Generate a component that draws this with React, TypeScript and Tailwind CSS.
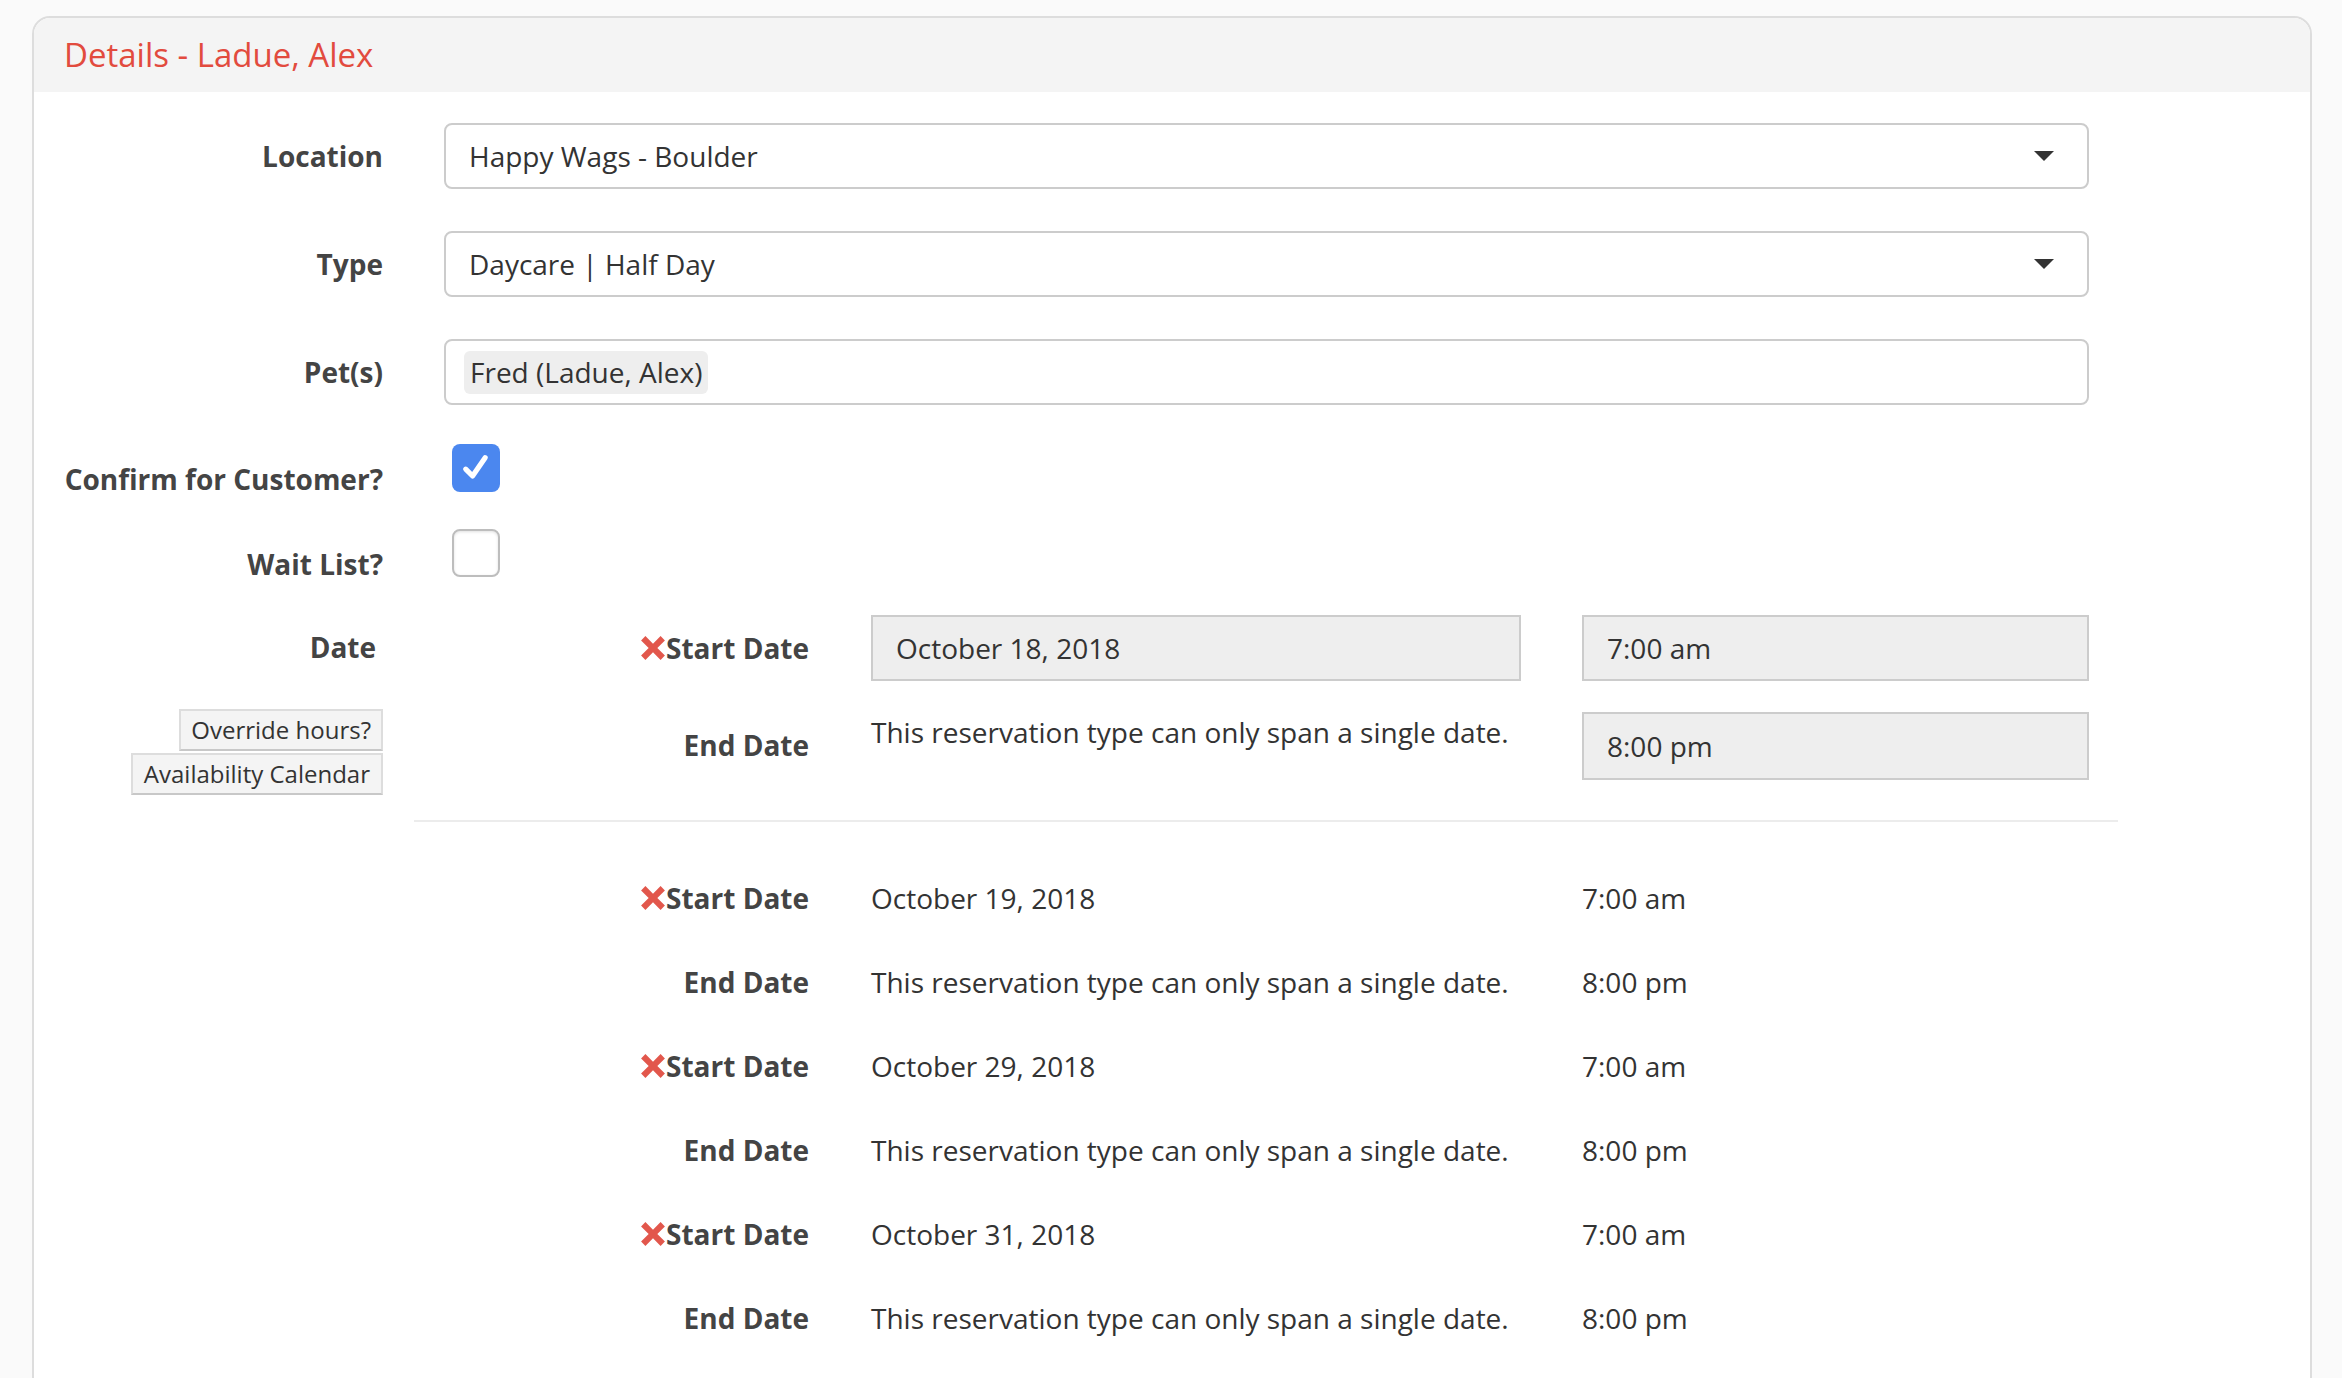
import React from "react";

const labelCls =
  "w-[349px] shrink-0 text-right text-[28px] font-bold leading-[40px] text-[#444444]";
const subLabelCls =
  "flex w-[395px] shrink-0 items-center justify-end text-[28px] font-bold leading-[40px] text-[#444444]";

function Caret() {
  return (
    <svg width="20" height="10" viewBox="0 0 20 10">
      <path d="M0 0H20L10 10Z" fill="#333333" />
    </svg>
  );
}

function RedX() {
  return (
    <svg width="26" height="26" viewBox="0 0 24 24" className="shrink-0">
      <path
        d="M1 5L5 1L12 8L19 1L23 5L16 12L23 19L19 23L12 16L5 23L1 19L8 12Z"
        fill="#e2574c"
      />
    </svg>
  );
}

function SelectBox({ value }: { value: string }) {
  return (
    <div className="flex h-[66px] w-[1645px] items-center justify-between rounded-[8px] border-2 border-[#cccccc] bg-white pl-[23px] pr-[33px]">
      <span className="text-[28px] leading-[40px] text-[#333333]">{value}</span>
      <Caret />
    </div>
  );
}

function GreyInput({ value, width }: { value: string; width: string }) {
  return (
    <div
      className={`flex h-[66px] shrink-0 items-center border-2 border-[#cccccc] bg-[#eeeeee] pl-[23px] text-[28px] leading-[40px] text-[#333333] ${width}`}
    >
      {value}
    </div>
  );
}

const extraDates = [
  { start: "October 19, 2018" },
  { start: "October 29, 2018" },
  { start: "October 31, 2018" },
];

export default function App() {
  return (
    <div className="min-h-screen overflow-hidden bg-[#fafafa] pt-[16px] font-['Open_Sans',sans-serif]">
      <div className="ml-[32px] mr-[30px] min-h-[1400px] rounded-t-[18px] border-2 border-[#dddddd] bg-white">
        {/* header */}
        <div className="flex h-[74px] items-center rounded-t-[16px] bg-[#f4f4f4] px-[30px]">
          <h2 className="text-[33px] leading-[40px] text-[#e24b3e]">Details - Ladue, Alex</h2>
        </div>

        <div className="pt-[31px]">
          {/* Location */}
          <div className="flex h-[66px] items-center gap-[61px]">
            <div className={labelCls}>Location</div>
            <SelectBox value="Happy Wags - Boulder" />
          </div>

          {/* Type */}
          <div className="mt-[42px] flex h-[66px] items-center gap-[61px]">
            <div className={labelCls}>Type</div>
            <SelectBox value="Daycare | Half Day" />
          </div>

          {/* Pets */}
          <div className="mt-[42px] flex h-[66px] items-center gap-[61px]">
            <div className={labelCls}>Pet(s)</div>
            <div className="flex h-[66px] w-[1645px] items-center rounded-[8px] border-2 border-[#cccccc] bg-white pl-[18px]">
              <span className="flex h-[43px] items-center rounded-[6px] bg-[#eeeeee] px-[6px] text-[28px] leading-[40px] text-[#333333]">
                Fred (Ladue, Alex)
              </span>
            </div>
          </div>

          {/* Confirm */}
          <div className="mt-[39px] flex items-start gap-[61px]">
            <div className={`${labelCls} pt-[15px]`}>Confirm for Customer?</div>
            <div className="ml-[8px] flex h-[48px] w-[48px] items-center justify-center rounded-[8px] bg-[#4b87ef]">
              <svg width="32" height="32" viewBox="0 0 28 28">
                <path
                  d="M5 15L11 21L22 5"
                  fill="none"
                  stroke="white"
                  strokeWidth="4.5"
                  strokeLinecap="round"
                  strokeLinejoin="round"
                />
              </svg>
            </div>
          </div>

          {/* Wait list */}
          <div className="mt-[30px] flex items-start gap-[61px]">
            <div className={`${labelCls} pt-[15px]`}>Wait List?</div>
            <div className="ml-[8px] h-[48px] w-[48px] rounded-[8px] border-2 border-[#bdbdbd] bg-white shadow-[inset_0_1px_3px_rgba(0,0,0,0.12)]" />
          </div>

          {/* Date section */}
          <div className="mt-[31px] flex items-start">
            <div className="flex w-[349px] shrink-0 flex-col items-end">
              <div className="pr-[7px] pt-[12px] text-[28px] font-bold leading-[40px] text-[#444444]">Date</div>
              <div className="mt-[42px] flex flex-col items-end gap-[2px]">
                <button className="h-[42px] border-2 border-[#dddddd] border-b-[#c8c8c8] bg-[#f4f4f4] px-[10px] text-[24px] leading-[30px] text-[#333333]">
                  Override hours?
                </button>
                <button className="h-[42px] border-2 border-[#dddddd] border-b-[#c8c8c8] bg-[#f4f4f4] px-[11px] text-[24px] leading-[30px] text-[#333333]">
                  Availability Calendar
                </button>
              </div>
            </div>

            <div className="ml-[31px] w-[1704px]">
              {/* editable first date */}
              <div className="flex h-[66px] items-center">
                <div className={subLabelCls}>
                  <RedX />
                  <span>Start Date</span>
                </div>
                <div className="ml-[62px]">
                  <GreyInput value="October 18, 2018" width="w-[650px]" />
                </div>
                <div className="ml-[61px]">
                  <GreyInput value="7:00 am" width="w-[507px]" />
                </div>
              </div>
              <div className="mt-[31px] flex items-start">
                <div className={`${subLabelCls} pt-[13px]`}>End Date</div>
                <div className="ml-[62px] w-[650px] shrink-0 text-[28px] leading-[40px] text-[#333333]">
                  This reservation type can only span a single date.
                </div>
                <div className="ml-[61px]">
                  <GreyInput value="8:00 pm" width="w-[507px] h-[68px]" />
                </div>
              </div>

              <div className="mt-[40px] h-[2px] bg-[#ececec]" />

              {/* additional dates */}
              <div className="pt-[34px]">
                {extraDates.map((d) => (
                  <div key={d.start}>
                    <div className="flex h-[84px] items-center">
                      <div className={subLabelCls}>
                        <RedX />
                        <span>Start Date</span>
                      </div>
                      <div className="ml-[62px] w-[650px] shrink-0 text-[28px] leading-[40px] text-[#333333]">
                        {d.start}
                      </div>
                      <div className="ml-[61px] text-[28px] leading-[40px] text-[#333333]">7:00 am</div>
                    </div>
                    <div className="flex h-[84px] items-center">
                      <div className={subLabelCls}>End Date</div>
                      <div className="ml-[62px] w-[650px] shrink-0 text-[28px] leading-[40px] text-[#333333]">
                        This reservation type can only span a single date.
                      </div>
                      <div className="ml-[61px] text-[28px] leading-[40px] text-[#333333]">8:00 pm</div>
                    </div>
                  </div>
                ))}
              </div>
            </div>
          </div>
        </div>
      </div>
    </div>
  );
}
